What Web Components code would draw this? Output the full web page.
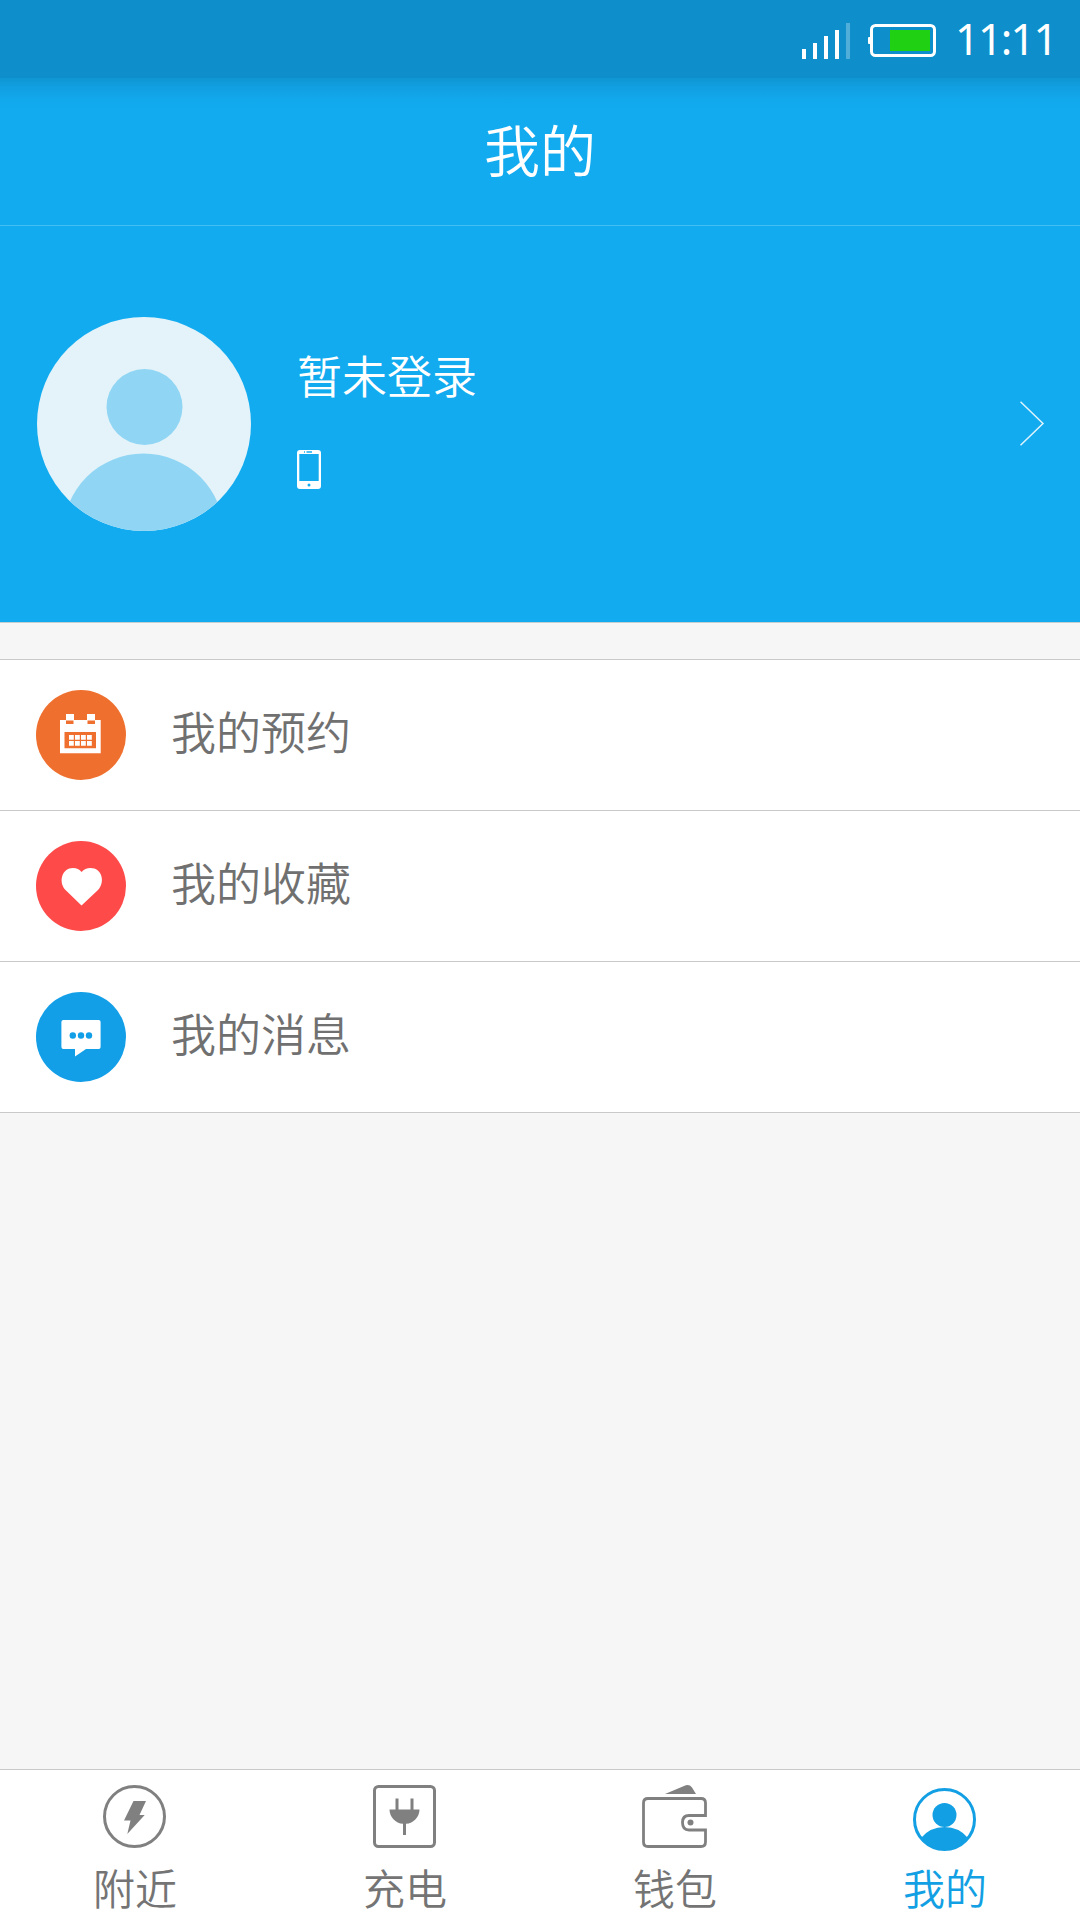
<!DOCTYPE html>
<html lang="zh-CN">
<head>
<meta charset="utf-8">
<title>我的</title>
<style>
html,body{margin:0;padding:0}
body{font-family:"Noto Sans CJK SC",sans-serif;font-weight:350;background:#f6f6f6}
</style>
</head>
<body>
<mine-app></mine-app>
<script>
const define = (name, html) => {
  const t = document.createElement('template');
  t.innerHTML = html;
  customElements.define(name, class extends HTMLElement {
    constructor() {
      super();
      this.attachShadow({mode: 'open'}).appendChild(t.content.cloneNode(true));
    }
  });
};

define('status-bar', `
<style>
:host{display:flex;height:78px;box-sizing:border-box;background:#0e8fcb;justify-content:flex-end;align-items:flex-start;color:#fff}
svg{display:block;flex:none}
.time{font:400 43px/50px "Noto Sans",sans-serif;width:125px;padding-top:14px;letter-spacing:-1.7px;white-space:nowrap}
</style>
<svg width="155" height="78" viewBox="800 0 155 78">
  <g fill="#fff"><rect x="802" y="49" width="4" height="10"/><rect x="813" y="43" width="4" height="16"/><rect x="824" y="36" width="4" height="23"/><rect x="835" y="30" width="4" height="29"/><rect x="846" y="23" width="4" height="36" opacity=".28"/>
  <rect x="868" y="37" width="4" height="7" rx="1"/></g>
  <rect x="871.500" y="25.500" width="63" height="30" rx="4" fill="none" stroke="#fff" stroke-width="3"/>
  <rect x="890" y="30" width="40" height="21" fill="#20d013"/>
</svg>
<div class="time"><slot></slot></div>`);

define('title-bar', `
<style>
:host{display:flex;height:148px;box-sizing:border-box;border-bottom:1px solid #45bef4;justify-content:center;align-items:flex-start;color:#fff;font-size:56px;line-height:80px;padding-top:30px;
background:linear-gradient(#1096d3,#11a0e2 10px,#12a8ec 22px,#12abf0 32px)}
</style><span><slot></slot></span>`);

define('profile-card', `
<style>
:host{display:flex;height:397px;box-sizing:border-box;border-bottom:1px solid #c4cdd1;background:#12abf0;align-items:center;color:#fff;padding:0 34px 0 37px}
svg{display:block;flex:none}
.info{flex:1;padding:0 0 16px 46px;display:flex;flex-direction:column;gap:43px}
.name{font-size:45px;line-height:64px}
</style>
<svg width="214" height="214" viewBox="0 0 214 214"><defs><clipPath id="c"><circle cx="107" cy="107" r="107"/></clipPath></defs>
<g clip-path="url(#c)"><rect width="214" height="214" fill="#e3f3f9"/><circle cx="107.500" cy="90" r="38" fill="#90d6f4"/><circle cx="106.500" cy="217" r="80.500" fill="#90d6f4"/></g></svg>
<div class="info"><span class="name"><slot></slot></span>
<svg width="24" height="39" viewBox="0 0 24 39"><path fill="#fff" fill-rule="evenodd" d="M3 0H21Q24 0 24 3V36Q24 39 21 39H3Q0 39 0 36V3Q0 0 3 0ZM2.300 4V31H21.700V4ZM7 1.300V2.700H8V1.300ZM9.500 1.300V2.700H15V1.300ZM12 33.500A1.500 1.500 0 1 0 12 36.500A1.500 1.500 0 1 0 12 33.500Z"/></svg></div>
<svg width="26" height="46" viewBox="0 0 26 46"><path d="M.500 .8 23 22.500 .5 44.300" fill="none" stroke="#dff4fc" stroke-width="1.500"/></svg>`);

define('menu-row', `
<style>
:host{display:flex;height:151px;box-sizing:border-box;border-bottom:1px solid #c9c9c9;background:#fff;align-items:center;padding-left:36px;gap:45px;color:#707070;font-size:45px;line-height:64px}
.icon{display:flex;width:90px;height:90px;flex:none}
.text{padding-bottom:8px}
</style><div class="icon"><slot name="icon"></slot></div><span class="text"><slot></slot></span>`);

define('tab-item', `
<style>
:host{display:flex;flex:1;flex-direction:column;align-items:center;color:#747474;font-size:42px;line-height:60px;padding-top:10px}
:host([active]){color:#129fe3}
.icon{display:flex;height:77px}
</style><div class="icon"><slot name="icon"></slot></div><span><slot></slot></span>`);

define('tab-bar', `
<style>:host{display:flex;height:151px;box-sizing:border-box;border-top:1px solid #c9c9c9;background:#fff}</style><slot></slot>`);

define('mine-app', `
<style>
:host{display:flex;flex-direction:column;width:1080px;height:1920px;overflow:hidden;background:#f6f6f6}
status-bar,title-bar,profile-card,tab-bar{flex:none}
.list{margin-top:36px;border-top:1px solid #c9c9c9}
.space{flex:1}
svg{display:block}
</style>
<status-bar>11:11</status-bar>
<title-bar>我的</title-bar>
<profile-card>暂未登录</profile-card>
<div class="list">
<menu-row><svg slot="icon" width="90" height="90" viewBox="0 0 90 90"><circle cx="45" cy="45" r="45" fill="#ef702e"/><path fill="#fff" d="M24 30H30V24H38V30H51V24H59V30H64.700V63.300H24Z"/><path fill="#ef702e" d="M30 30.500H37.500V34H30ZM51.500 30.500H59V34H51.500ZM28.500 42H60V58.300H28.500Z"/><path fill="#fff" d="M33 45h4.800v4.800h-4.800zM39 45h4.800v4.800h-4.800zM45 45h4.800v4.800h-4.800zM51 45h4.800v4.800h-4.800zM33 51h4.800v4.800h-4.800zM39 51h4.800v4.800h-4.800zM45 51h4.800v4.800h-4.800zM51 51h4.800v4.800h-4.800z"/></svg>我的预约</menu-row>
<menu-row><svg slot="icon" width="90" height="90" viewBox="0 0 90 90"><circle cx="45" cy="45" r="45" fill="#ff4a4a"/><path fill="#fff" d="M45.500 64.500 29.500 49C22 41 26 27 37 27Q42.500 27 45.500 31Q49 27 54.500 27C66 27 69.500 41 62 49Z"/></svg>我的收藏</menu-row>
<menu-row><svg slot="icon" width="90" height="90" viewBox="0 0 90 90"><circle cx="45" cy="45" r="45" fill="#129fe8"/><path fill="#fff" d="M27.400 28H62.600Q64.600 28 64.600 30V55Q64.600 57 62.600 57H50L39 64.500V57H27.400Q25.400 57 25.400 55V30Q25.400 28 27.400 28Z"/><g fill="#129fe8"><circle cx="36.800" cy="43.500" r="3.200"/><circle cx="45" cy="43.500" r="3.200"/><circle cx="53" cy="43.500" r="3.200"/></g></svg>我的消息</menu-row>
</div>
<div class="space"></div>
<tab-bar>
<tab-item><svg slot="icon" width="70" height="72" viewBox="0 0 70 72"><circle cx="34.500" cy="36.500" r="30" fill="none" stroke="#808080" stroke-width="3"/><path fill="#808080" d="M33.500 21H46L39.500 35H44.700L27.300 54L30.500 40.500H24Z"/></svg>附近</tab-item>
<tab-item><svg slot="icon" width="70" height="72" viewBox="0 0 70 72"><rect x="4.500" y="6.500" width="60" height="60" rx="4" fill="none" stroke="#808080" stroke-width="3"/><path fill="#808080" d="M25.500 18.500h3v11h12v-11h3v11h6A15 14.500 0 0 1 36 43.800V55H33V43.800A15 14.500 0 0 1 19.500 29.500h6Z"/></svg>充电</tab-item>
<tab-item><svg slot="icon" width="70" height="72" viewBox="0 0 70 72"><path fill="#808080" d="M25 14 44 6Q49 3.500 52 7.500L56 14Z"/><path fill="none" stroke="#808080" stroke-width="2.800" d="M65.500 36V23Q65.500 18.500 61 18.500H8Q3.500 18.500 3.500 23V62Q3.500 66.500 8 66.500H61Q65.500 66.500 65.500 62V50H49Q42.500 50 42.500 42.500Q42.500 35.500 49 35.500H66.900"/><circle cx="50.500" cy="42.500" r="3" fill="#808080"/></svg>钱包</tab-item>
<tab-item active><svg slot="icon" width="70" height="72" viewBox="0 0 70 72"><circle cx="34.500" cy="39.500" r="30" fill="none" stroke="#129fe3" stroke-width="3"/><circle cx="34.500" cy="35" r="12" fill="#129fe3"/><path fill="#129fe3" d="M11 58Q20 47 34.500 47Q49 47 58 58A31 31 0 0 1 11 58Z"/></svg>我的</tab-item>
</tab-bar>`);
</script>
</body>
</html>
